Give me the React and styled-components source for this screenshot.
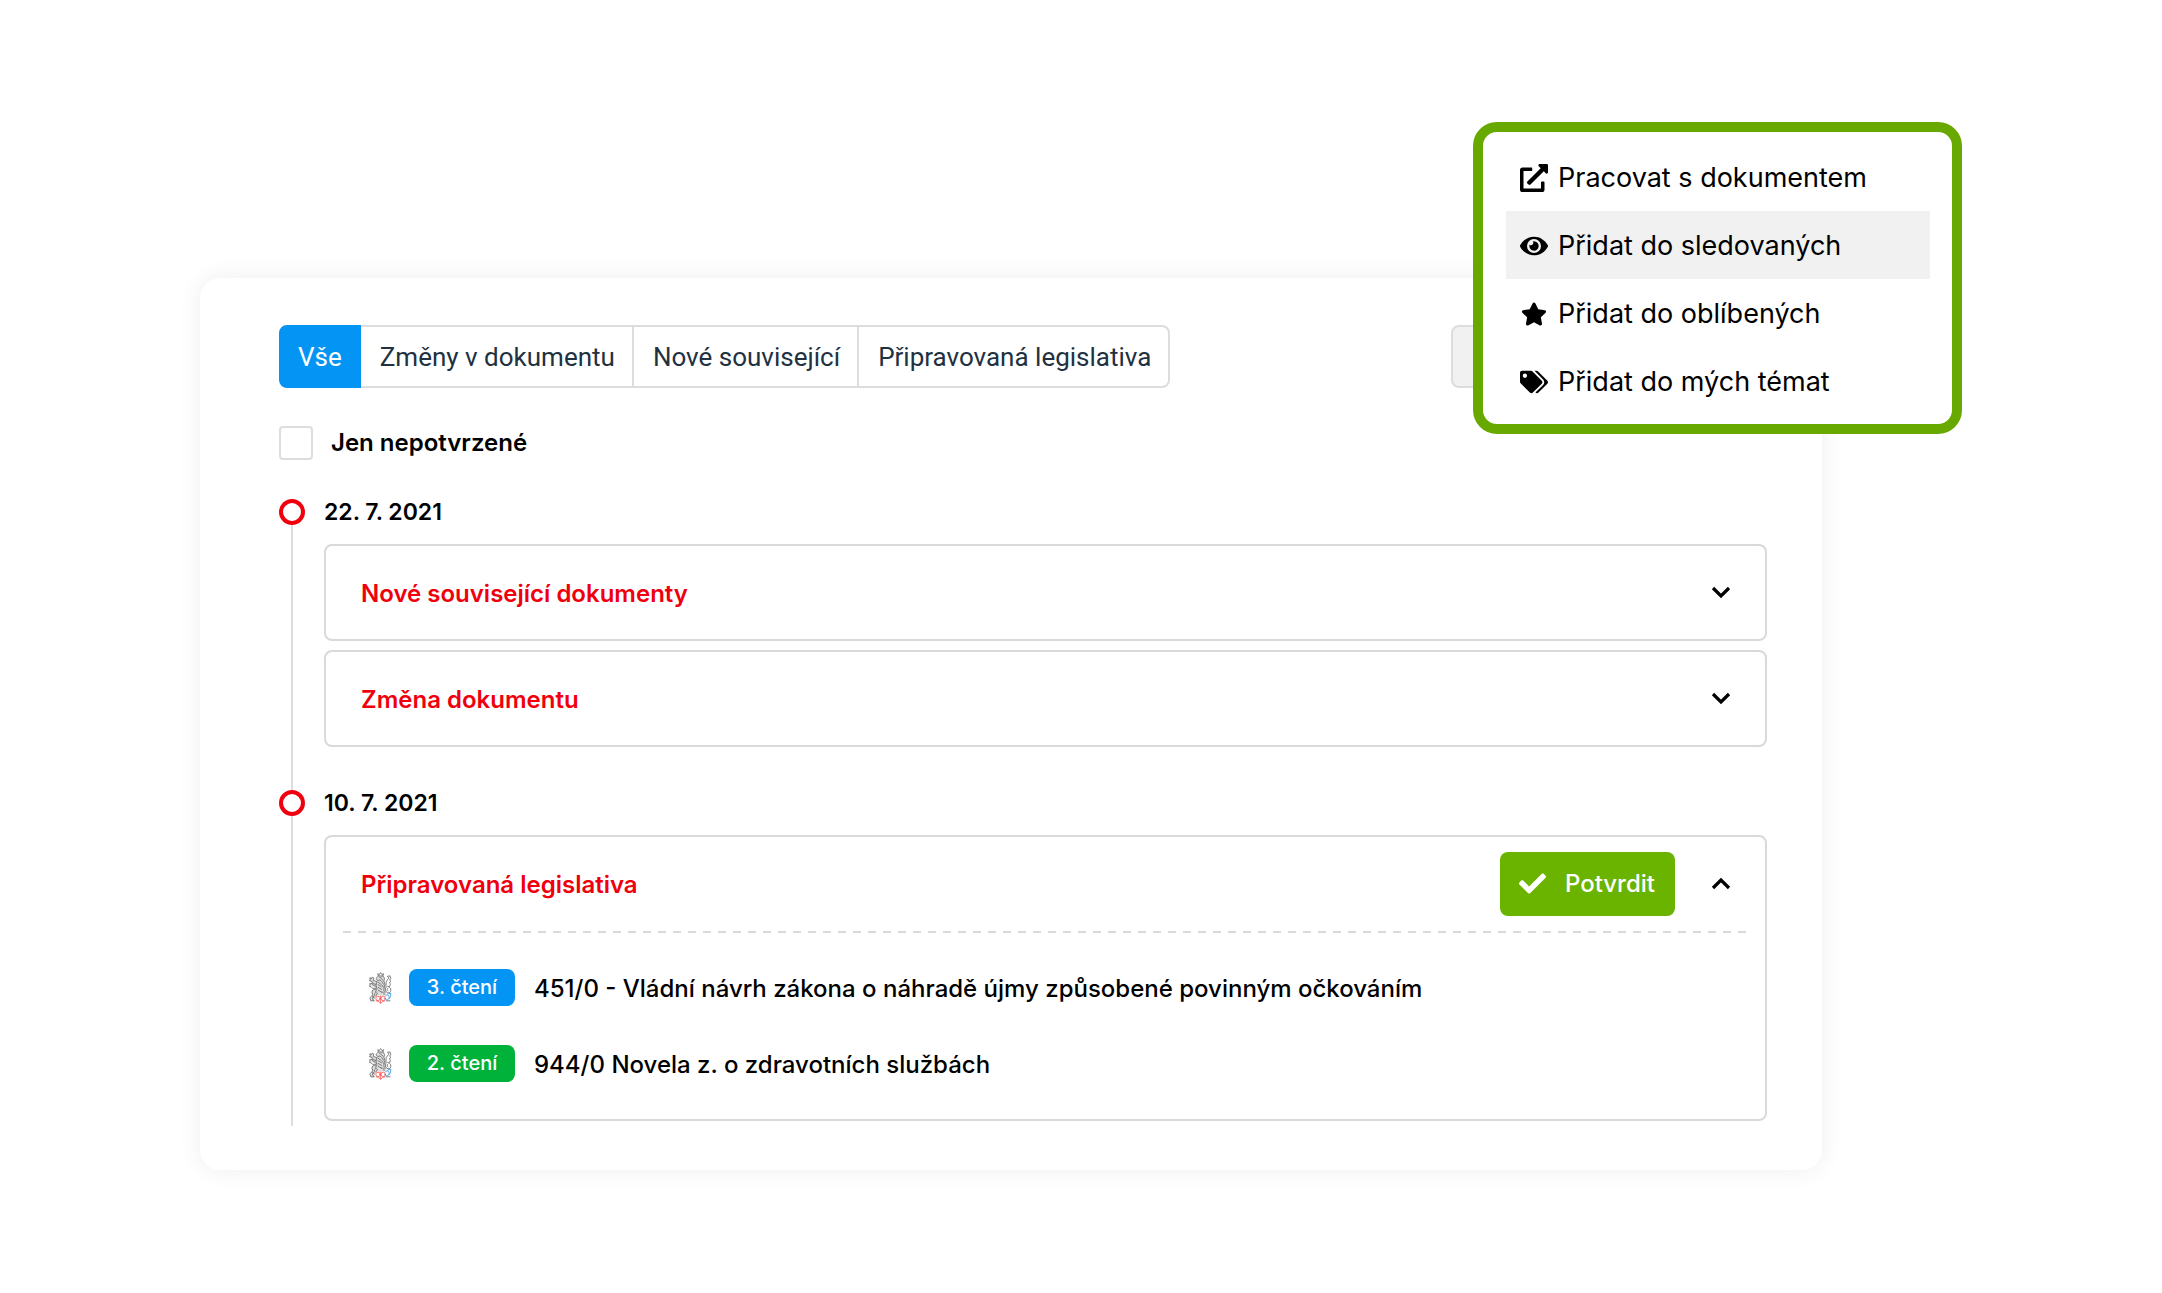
import React from 'react';
import styled, { createGlobalStyle, css } from 'styled-components';
import { FaCheck, FaExternalLinkAlt, FaEye, FaStar, FaTags } from 'react-icons/fa';

const GlobalStyle = createGlobalStyle`
  *,
  *::before,
  *::after {
    box-sizing: border-box;
  }

  body {
    margin: 0;
    background: #fff;
    color: #000;
    font-family: Inter, 'Liberation Sans', sans-serif;
    font-size: 24px;
    line-height: 32px;
  }

  button {
    font-family: inherit;
    font-size: inherit;
    line-height: inherit;
    color: inherit;
    cursor: pointer;
  }
`;

const Page = styled.main`
  min-height: 100vh;
  padding: 278px 340px 122px 200px;
`;

const Card = styled.section`
  position: relative;
  padding: 47px 55px 49px 79px;
  border-radius: 20px;
  background: #fff;
  box-shadow: 0 0 24px rgba(0, 0, 0, 0.07);
`;

const Toolbar = styled.div`
  display: flex;
  justify-content: space-between;
`;

const Tabs = styled.div`
  display: flex;
`;

const Tab = styled.button`
  height: 63px;
  margin-left: -2px;
  padding: 0 17px 0 19px;
  border: 2px solid #ddd;
  background: #fff;
  color: #22313f;
  font-family: Roboto, sans-serif;
  font-size: 26px;
  white-space: nowrap;

  &:first-child {
    margin-left: 0;
    border-radius: 8px 0 0 8px;
  }

  &:last-child {
    border-radius: 0 8px 8px 0;
  }

  ${({ $active }) =>
    $active &&
    css`
      position: relative;
      padding: 0 17px;
      border-color: #0394f4;
      background: #0394f4;
      color: #fff;
    `}
`;

const MoreButton = styled.button`
  width: 316px;
  height: 63px;
  border: 2px solid #ddd;
  border-radius: 8px;
  background: #f1f1f1;
`;

const Filter = styled.label`
  display: flex;
  align-items: center;
  gap: 18px;
  margin-top: 38px;
  font-weight: 600;
`;

const Checkbox = styled.input`
  appearance: none;
  width: 34px;
  height: 34px;
  margin: 0;
  border: 2px solid #ddd;
  border-radius: 4px;
  background: #fff;

  &:checked {
    background: #0394f4;
  }
`;

const Timeline = styled.ol`
  margin: 36px 0 0;
  padding: 0;
  list-style: none;
`;

const Day = styled.li`
  display: grid;
  grid-template-columns: 26px 1fr;
  column-gap: 19px;
`;

const Rail = styled.div`
  display: flex;
  flex-direction: column;
  align-items: center;

  &::before {
    content: '';
    width: 26px;
    height: 26px;
    margin-top: 3px;
    border: 4px solid #f0000c;
    border-radius: 50%;
  }

  &::after {
    content: '';
    flex: 1;
    width: 2px;
    margin-bottom: -5px;
    background: #ddd;
  }
`;

const DayBody = styled.div`
  padding-bottom: ${({ $last }) => ($last ? 0 : 40)}px;
`;

const DayTitle = styled.h2`
  margin: 0 0 16px;
  font-size: 23px;
  font-weight: 600;
`;

const Panels = styled.div`
  display: grid;
  gap: 9px;
`;

const Panel = styled.article`
  border: 2px solid #d9d9d9;
  border-radius: 8px;
`;

const PanelHead = styled.div`
  display: flex;
  align-items: center;
  gap: 36px;
  height: 93px;
  padding: 0 34px 0 35px;
`;

const PanelTitle = styled.h3`
  flex: 1;
  margin: 0;
  padding-top: 2px;
  color: #f0000c;
  font-size: 24px;
  font-weight: 600;
`;

const Toggle = styled.button`
  display: flex;
  padding: 4px 0;
  border: 0;
  background: none;
`;

const Confirm = styled.button`
  display: flex;
  align-items: center;
  gap: 19px;
  height: 64px;
  padding: 0 20px 0 19px;
  border: 0;
  border-radius: 8px;
  background: #6ab400;
  color: #fff;
  font-weight: 500;
`;

const Divider = styled.hr`
  height: 2px;
  margin: 1px 13px 0 17px;
  border: 0;
  background: repeating-linear-gradient(90deg, #d9d9d9 0 8px, transparent 8px 15px);
`;

const Bills = styled.ul`
  display: grid;
  gap: 39px;
  margin: 0;
  padding: 36px 35px 37px;
  list-style: none;
`;

const Bill = styled.li`
  display: flex;
  align-items: center;
  padding-left: 8px;
`;

const Badge = styled.span`
  width: 106px;
  margin: 0 19px 0 17px;
  border-radius: 8px;
  background: ${({ $color }) => $color};
  color: #fff;
  font-size: 20px;
  font-weight: 500;
  line-height: 37px;
  text-align: center;
`;

const BillLink = styled.a`
  padding-top: 2px;
  color: #000;
  font-weight: 500;
  text-decoration: none;
`;

const Menu = styled.div`
  position: absolute;
  top: -156px;
  right: -140px;
  width: 489px;
  padding: 11px 22px 9px 23px;
  border: 10px solid #68a900;
  border-radius: 24px;
  background: #fff;
`;

const MenuItem = styled.button`
  display: flex;
  align-items: center;
  gap: 10px;
  width: 100%;
  height: 68px;
  padding: 2px 14px 0;
  border: 0;
  background: ${({ $active }) => ($active ? '#f1f1f1' : 'transparent')};
  font-size: 27px;
`;

const MenuIcon = styled.span`
  display: flex;
  justify-content: center;
  width: 28px;
`;

const tabs = ['Vše', 'Změny v dokumentu', 'Nové související', 'Připravovaná legislativa'];

const bills = [
  { stage: '3. čtení', color: '#0394f4', name: '451/0 - Vládní návrh zákona o náhradě újmy způsobené povinným očkováním' },
  { stage: '2. čtení', color: '#00b23a', name: '944/0 Novela z. o zdravotních službách' },
];

const menu = [
  { label: 'Pracovat s dokumentem', icon: <FaExternalLinkAlt size={28} /> },
  { label: 'Přidat do sledovaných', icon: <FaEye size={28} />, active: true },
  { label: 'Přidat do oblíbených', icon: <FaStar size={26} /> },
  { label: 'Přidat do mých témat', icon: <FaTags size={28} /> },
];

function Chevron({ up }) {
  return (
    <svg width="20" height="14" viewBox="0 0 20 14" fill="none" stroke="#000" strokeWidth="3.2">
      <path d={up ? 'M2 11 10 3l8 8' : 'M2 2l8 8 8-8'} />
    </svg>
  );
}

// Český lev s lipovou stuhou
function Crest() {
  return (
    <svg width="23" height="32" viewBox="0 0 23 32" fill="none" strokeWidth="0.8" strokeLinecap="round">
      <path
        fill="#dedede"
        d="M9 3.600h5.500l1 5 .5 6 1.500 5-1 4H7.500L4.500 28H2l.5-4L3 19l4-3-4-2-2.400-1.500L3 11 .8 8.500V6l3-.5.8 2.500 3 1.500z"
      />
      <g stroke="#5f5f5f">
        <path d="M9.200 3.600 8.800 1.700l1.500.9L11.600.6l1.300 2 1.600-.9-.5 2z" />
        <path d="M9.200 4.200c-1.600.8-2.200 2-1.800 3.400l1.700.9 1.800-.6 1.400 1.200M14 4.200c1.800 1.200 2 3 .8 4.800M10.800 5.600l1.400.4M12.600 7l1.300 1" />
        <path d="M7.600 9.600 4.400 8.400 4.800 6 3.200 5.200l-.6 1.200L.8 5.800l.4 1.800L.6 8.800l2 .2 1.800 2.600 2.800 1" />
        <path d="M6.200 14.200 3.800 13l-.8-2-1.200.8-1-.4.2 1.800-.6 1.200 1.800.4 1.400 1.600 3-.2" />
        <path d="M8 10c-1 1.700-1.400 3.200-.6 5s.5 3.600-1.200 4.600M15 9.600c1.200 2 1 4.200.2 6.200s-.4 3.600.8 4.800" />
        <path d="M9.200 10.200l3.200 2.400M9 12.600l3.400 2.200M9 15.400l3.600 2M13 9.800l1.400 2.400M13.400 13.400l1.200 2M9.200 18.200l3.400 2" />
        <path d="M6.600 17.200C4.200 17 2.900 18.400 3 20.600l1 2.200-3.200 3 1.200 2.800M7.800 20c-2 .6-2.800 2-2.200 3.600L3.400 26l1 2.600M8.400 21.400 6.800 24" />
        <path d="M12.600 20c1.800 0 2.600 1 2.600 2.600M3.600 24.600 5.400 26M2 28.800h3.200M17.600 28.800H21" />
        <path d="M16.400 14.400c1.600-1.600.2-3.600 1-5.200s2.200-1.800 2.400-3.400l-1.400-1.400 2.600-.6.8 2.600-1.200 1.800 1.400 1.200-1.600 1.200c1.400 1.400 1.200 3-.4 4.200" />
        <path d="M17.800 14.400c-1.800 1.400-2 4.400-.2 5.800s4 .4 4.200-1.800-1.200-3.800-3-4.200M18.800 16.200c-1 .8-1 2.200.2 2.800" />
      </g>
      <g stroke="#ff4f4a">
        <path d="M11.600 24v7.200M10 29.600l1.600 1.700 1.600-1.700M7.200 28.800l2 .6M16 28.800l-2 .6" />
        <ellipse cx="9" cy="26.400" rx="2.200" ry="2.200" />
        <ellipse cx="14.200" cy="26.400" rx="2.200" ry="2.200" />
      </g>
      <g stroke="#2f8bd8">
        <path d="M16.400 24c.8-1.400 2.200-1.600 3.200-.4s.6 3.200-.8 4-2.600 0-2.800-1.400M18.800 22l3-1-.2 3.400-1.400 2.200" />
      </g>
    </svg>
  );
}

function ChangePanel({ title, open, children }) {
  return (
    <Panel>
      <PanelHead>
        <PanelTitle>{title}</PanelTitle>
        {open && (
          <Confirm type="button">
            <FaCheck size={27} />
            Potvrdit
          </Confirm>
        )}
        <Toggle type="button" aria-expanded={!!open} aria-label={title}>
          <Chevron up={open} />
        </Toggle>
      </PanelHead>
      {children}
    </Panel>
  );
}

export default function App() {
  return (
    <Page>
      <GlobalStyle />
      <Card>
        <Toolbar>
          <Tabs>
            {tabs.map((tab, i) => (
              <Tab key={tab} type="button" $active={i === 0}>
                {tab}
              </Tab>
            ))}
          </Tabs>
          <MoreButton type="button" aria-label="Možnosti" />
        </Toolbar>

        <Filter>
          <Checkbox type="checkbox" />
          Jen nepotvrzené
        </Filter>

        <Timeline>
          <Day>
            <Rail />
            <DayBody>
              <DayTitle>22. 7. 2021</DayTitle>
              <Panels>
                <ChangePanel title="Nové související dokumenty" />
                <ChangePanel title="Změna dokumentu" />
              </Panels>
            </DayBody>
          </Day>
          <Day>
            <Rail />
            <DayBody $last>
              <DayTitle>10. 7. 2021</DayTitle>
              <Panels>
                <ChangePanel title="Připravovaná legislativa" open>
                  <Divider />
                  <Bills>
                    {bills.map((bill) => (
                      <Bill key={bill.name}>
                        <Crest />
                        <Badge $color={bill.color}>{bill.stage}</Badge>
                        <BillLink href="#">{bill.name}</BillLink>
                      </Bill>
                    ))}
                  </Bills>
                </ChangePanel>
              </Panels>
            </DayBody>
          </Day>
        </Timeline>

        <Menu>
          {menu.map((item) => (
            <MenuItem key={item.label} type="button" $active={item.active}>
              <MenuIcon>{item.icon}</MenuIcon>
              {item.label}
            </MenuItem>
          ))}
        </Menu>
      </Card>
    </Page>
  );
}
